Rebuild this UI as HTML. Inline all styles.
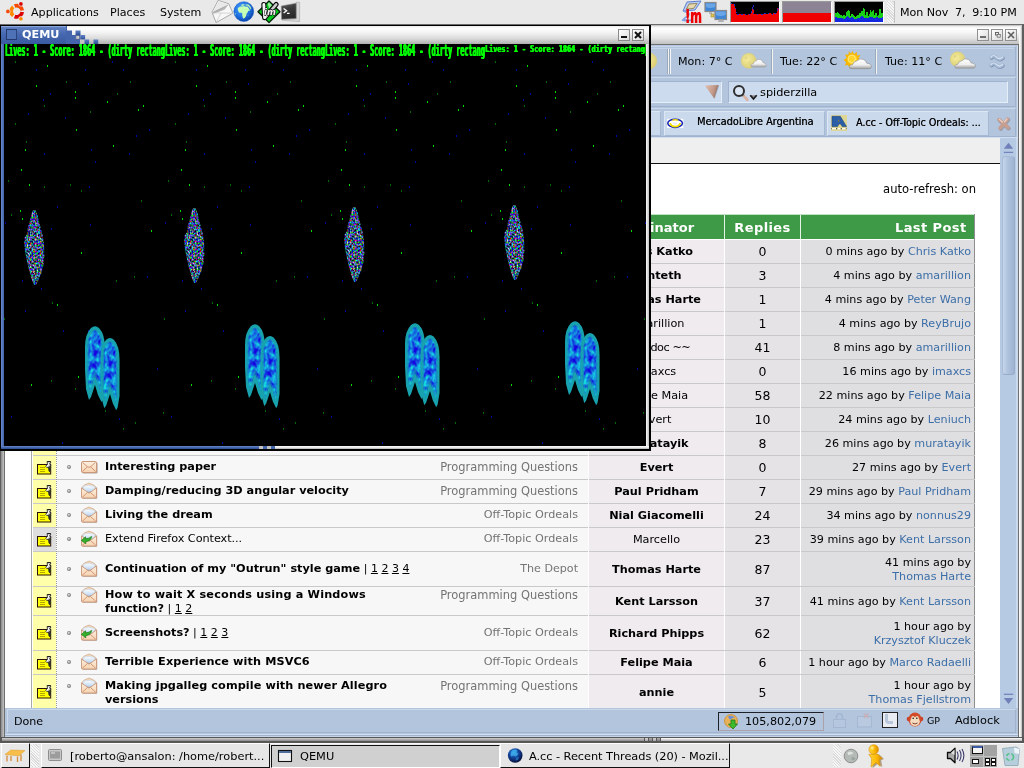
<!DOCTYPE html>
<html lang="en">
<head>
<meta charset="utf-8">
<title>Desktop - QEMU and A.cc Recent Threads</title>
<style>
html,body{margin:0;padding:0;}
body{width:1024px;height:768px;overflow:hidden;position:relative;background:#e8e8e8;font-family:"DejaVu Sans","Liberation Sans",sans-serif;font-size:11px;color:#000;}
div,span,a,svg,i,b{position:absolute;box-sizing:border-box;}
.layer{left:0;top:0;width:1024px;height:768px;will-change:transform;}
.t{white-space:pre;line-height:14px;height:14px;font-size:11.1px;}
a{color:#3c6fa8;text-decoration:none;}
/* ---------- panels ---------- */
#toppanel{left:0;top:0;width:1024px;height:24px;background:#e9e9e9;}
#botpanel{left:0;top:742px;width:1024px;height:26px;background:#e9e9e9;}
/* ---------- firefox window ---------- */
#ffwin{left:0;top:24px;width:1024px;height:718px;background:#f0f0f0;}
.field{background:#cddbee;border:1px solid #9fb3cf;border-right-color:#e6eef8;border-bottom-color:#e6eef8;}
.tab{background:#cbd9ec;border:1px solid #dde7f4;border-right-color:#a6b9d3;border-bottom-color:#a6b9d3;}
.cf{font-family:"DejaVu Sans Condensed","DejaVu Sans","Liberation Sans",sans-serif;text-shadow:0.35px 0 0 rgba(0,0,0,0.75);}
/* ---------- table ---------- */
.hl{left:33px;width:942px;height:1px;background:#c9c9c9;}
.c0{left:33px;width:23px;background:#ffffaa;}
.c0g{left:33px;width:23px;background:#dedede;}
.c1{left:57px;width:532px;background:#f7f7f7;}
.c2{left:589px;width:135px;background:#efebee;}
.c3{left:725px;width:75px;background:#e6e3e6;}
.c4{left:801px;width:173px;background:#dfdee1;}
.tt{font-weight:bold;font-size:11.25px;left:105px;}
.tn{font-size:11.25px;left:105px;}
.pg{font-weight:normal;font-size:11px;}
.pg u{text-decoration:underline;}
.fr{color:#747474;font-size:11.45px;text-align:right;left:380px;width:198px;}
.or{font-weight:bold;font-size:11.25px;text-align:center;left:589px;width:135px;}
.on{font-size:11.25px;text-align:center;left:589px;width:135px;}
.rp{font-size:12.5px;text-align:center;left:725px;width:75px;}
.lp{font-size:11.15px;text-align:right;left:801px;width:170px;}
/* ---------- qemu window ---------- */
.gt{color:#00ff00;font-family:"DejaVu Sans Mono","Liberation Mono",monospace;font-weight:bold;font-size:15px;line-height:14px;height:14px;white-space:pre;transform-origin:0 0;transform:scaleX(0.454);text-shadow:0.9px 0 0 #00ff00,-0.7px 0 0 #00ff00;}
.star{width:1px;height:1px;}
.task{top:2px;height:22px;border:1px solid #fff;border-right-color:#555;border-bottom-color:#555;}
</style>
</head>
<body>
<svg width="0" height="0" style="left:0;top:0">
<defs>
<linearGradient id="gPeach" x1="0" y1="0" x2="0" y2="1"><stop offset="0" stop-color="#fff1e0"/><stop offset="1" stop-color="#f6d2b0"/></linearGradient>
<linearGradient id="gPaper" x1="0" y1="0" x2="0" y2="1"><stop offset="0" stop-color="#ffffff"/><stop offset="1" stop-color="#bcd6f2"/></linearGradient>
<radialGradient id="gGlobe" cx="0.4" cy="0.35" r="0.7"><stop offset="0" stop-color="#4fa4ff"/><stop offset="0.6" stop-color="#1c6ee0"/><stop offset="1" stop-color="#0b3fa0"/></radialGradient>
<radialGradient id="gGlobe2" cx="0.4" cy="0.3" r="0.75"><stop offset="0" stop-color="#3a9ae6"/><stop offset="0.45" stop-color="#14459c"/><stop offset="1" stop-color="#020830"/></radialGradient>
<radialGradient id="gMoon" cx="0.4" cy="0.4" r="0.7"><stop offset="0" stop-color="#f4eb9c"/><stop offset="1" stop-color="#d9cc70"/></radialGradient>
<linearGradient id="gCloud" x1="0" y1="0" x2="0" y2="1"><stop offset="0" stop-color="#ffffff"/><stop offset="0.6" stop-color="#eeeeee"/><stop offset="1" stop-color="#9a9a9a"/></linearGradient>
<!-- sticky note with pin, 15x14 -->
<symbol id="note" viewBox="0 0 15 14">
<rect x="0.5" y="3.5" width="13.2" height="9.5" fill="#ffff00" stroke="#2a1208" stroke-width="1"/>
<path d="M3 6.5h5M3 8.5h5M3 10.5h5" stroke="#b4a800" stroke-width="1"/>
<path d="M8.6 5.2L10.4 3.4L10.2 0.4H13.6V2.2L12.6 2.4L13.6 4.6L13.2 10.8L12 10.2L11.4 6L9.8 6.6z" fill="#fafafa" stroke="#111" stroke-width="0.8" stroke-linejoin="round"/>
<path d="M12.2 4.6L12.7 10.2" stroke="#222" stroke-width="1"/><path d="M10.4 0.7h3" stroke="#111" stroke-width="1"/>
</symbol>
<!-- closed envelope 17x13 -->
<symbol id="envc" viewBox="0 0 17 13">
<rect x="1.4" y="1.4" width="15.2" height="11.2" rx="1.3" fill="#7a5e50" opacity="0.55"/>
<rect x="0.5" y="0.5" width="15" height="11" rx="1.3" fill="url(#gPeach)" stroke="#c9977a" stroke-width="1"/>
<path d="M1.5 1.5L6.3 5.6Q8 7.2 9.7 5.6L14.5 1.5M1.5 10.5L6.4 5.8M14.5 10.5L9.6 5.8" fill="none" stroke="#c4805f" stroke-width="0.8"/>
</symbol>
<!-- open envelope 17x17 -->
<symbol id="envo" viewBox="0 0 17 17">
<path d="M1.5 6.8Q2.8 3.3 8.8 1.8Q14.8 3.3 16.2 6.8V15.9Q16.2 16.8 15.3 16.8H2.4Q1.5 16.8 1.5 15.9z" fill="#7a5e50" opacity="0.55"/>
<path d="M0.6 6.2Q2 2.6 8 1Q14 2.6 15.4 6.2z" fill="#ecd6ba" stroke="#d2ac8c" stroke-width="0.7"/>
<path d="M2.2 4.3Q8 2.3 13.8 4.6V9.5H2.2z" fill="url(#gPaper)" stroke="#b4cdea" stroke-width="0.5"/>
<path d="M0.5 6L8 11.2L15.5 6V15.2Q15.5 16 14.7 16H1.3Q0.5 16 0.5 15.2z" fill="url(#gPeach)" stroke="#c9977a" stroke-width="0.9" stroke-linejoin="round"/>
<path d="M1.2 15.4L6.6 10.4M14.8 15.4L9.4 10.4" fill="none" stroke="#c98866" stroke-width="0.8"/>
</symbol>
<!-- open envelope with green reply arrow -->
<symbol id="enva" viewBox="0 0 17 17">
<use href="#envo" x="0" y="0" width="17" height="17"/>
<path transform="translate(0,0.8)" d="M0.3 9.6L4.6 6L4.5 8Q8.2 8 10.6 5.6Q10.2 10 4.7 10.9L4.9 13z" fill="#35b02c" stroke="#1b7c18" stroke-width="0.7" stroke-linejoin="round"/>
</symbol>
<symbol id="bul" viewBox="0 0 6 6"><circle cx="3" cy="3" r="2" fill="#868686"/><circle cx="2.8" cy="2.8" r="1.05" fill="#d8d8d8"/></symbol>
<!-- weather icons 30x22 -->
<symbol id="cloud" viewBox="0 0 18 10" preserveAspectRatio="none">
<path d="M2.6 9.6Q0.2 9.4 0.6 7.4Q1 5.8 3.2 5.8Q3.6 3.2 6.4 2.6Q8.4 0 11.4 1.4Q13.4 2.4 13.8 4.6Q17.6 5 17.4 7.8Q17.2 9.6 15 9.6z" fill="url(#gCloud)" stroke="#8c8c8c" stroke-width="0.5"/>
</symbol>
<symbol id="moonc" viewBox="0 0 30 22">
<circle cx="9" cy="9" r="7.6" fill="url(#gMoon)" stroke="#d5c977" stroke-width="0.6"/>
<circle cx="6.5" cy="7" r="1.3" fill="#e0d480" opacity="0.8"/><circle cx="10.5" cy="11" r="1.6" fill="#e2d684" opacity="0.7"/>
<use href="#cloud" x="9.5" y="7.5" width="19" height="10.5"/>
</symbol>
<symbol id="sunc" viewBox="0 0 30 22">
<g stroke="#f5b500" stroke-width="1.6" stroke-linecap="round"><path d="M10 1v3M3.2 3.4l2 2M16.8 3.4l-2 2M1 10.2h3M4.2 16l1.6-1.6M19 10.2h-2.6"/></g>
<circle cx="10" cy="10.2" r="5.2" fill="#ffd83a" stroke="#f0a800" stroke-width="0.8"/>
<use href="#cloud" x="9" y="9.5" width="20.5" height="11.2"/>
</symbol>
</defs>
</svg>
<svg width="0" height="0" style="left:0;top:0">
<defs>
<filter id="fNoise" x="0" y="0" width="100%" height="100%" color-interpolation-filters="sRGB">
<feTurbulence type="fractalNoise" baseFrequency="0.6 0.5" numOctaves="2" seed="4" result="n"/>
<feColorMatrix in="n" type="matrix" values="2.4 0 0 0 -0.98  0 2.4 0 0 -0.86  0 0 2.6 0 -0.8  0 0 0 0 1" result="c"/>
<feComposite in="c" in2="SourceGraphic" operator="in"/>
</filter>
<filter id="fBlob" x="0" y="0" width="100%" height="100%" color-interpolation-filters="sRGB">
<feTurbulence type="fractalNoise" baseFrequency="0.22 0.16" numOctaves="2" seed="11" result="n"/>
<feColorMatrix in="n" type="matrix" values="0 0 0 0 0.08  1.6 0 0 0 -0.35  0 0 0 0 0.88  0 0 0 0 1" result="c"/>
<feComposite in="c" in2="SourceGraphic" operator="in"/>
</filter>
<symbol id="rock" viewBox="0 0 24 80">
<path d="M11 3L13.5 3L15.5 8L17 15L19.5 24L21 30L22 38L22.5 48L21.5 58L19.5 66L16.5 73L14 78L12 78L9.5 72L7 63L5 54L3 44L2 36L2.5 31L5 27L6 20L8 14L9 8z" fill="#6a7684" filter="url(#fNoise)"/>
</symbol>
<symbol id="lobe" viewBox="0 0 22 78">
<path d="M1 22Q1 9 7 3Q11 -0.5 15 3Q21 9 21 24L21 62L19 74L17.5 77L14 70L11 60L7 72L5 75L2 64L1 44z" fill="#17a2ae"/>
<path d="M3.5 24Q3.5 12 8 6.5Q11 4 14 6.5Q18.5 12 18.5 26L18.5 60L17 68L11 50L6 66L3.5 54z" fill="#1a44d2" filter="url(#fBlob)"/>
<path d="M4 24Q4 12 8 7Q11 4.5 14 7Q18 12 18 26L18 58L17 64L11 48L6 62L4 52z" fill="none" stroke="#17a2ae" stroke-width="1.2" opacity="0.6"/>
</symbol>
<symbol id="blob" viewBox="0 0 40 90">
<use href="#lobe" x="1" y="0" width="22" height="78"/>
<use href="#lobe" x="16.5" y="10.5" width="21" height="77"/>
</symbol>
</defs>
</svg>
<div class="layer" id="ff">
<div style="left:0;top:24px;width:1024px;height:719px;background:#f2f2f2;border:2px solid #5e5e5e;border-top-width:1px;border-top-color:#6c6c6c;border-bottom-width:0"></div>
<div style="left:2px;top:25px;width:1020px;height:1px;background:#c8c8c8"></div>
<div style="left:2px;top:26px;width:1020px;height:18px;background:linear-gradient(#e6e6e6 0%,#ffffff 12%,#f6f6f6 35%,#e2e2e2 68%,#c0c0c0 100%)"></div>
<div style="left:2px;top:44px;width:1017px;height:1px;background:#707070"></div>
<div style="left:1px;top:45px;width:3px;height:693px;background:linear-gradient(90deg,#8a8a8a,#c4c4c4)"></div>
<div style="left:4px;top:45px;width:1px;height:692px;background:#6e6e6e"></div>
<div style="left:1018px;top:44px;width:1px;height:693px;background:#707070"></div>
<div style="left:1019px;top:26px;width:2px;height:712px;background:linear-gradient(90deg,#fff,#e4e4e4)"></div><div style="left:1021px;top:26px;width:1px;height:712px;background:#c8c8c8"></div>
<div style="left:0;top:737px;width:1024px;height:6px;background:#575757"></div>
<div style="left:2px;top:738px;width:642px;height:3px;background:linear-gradient(#d0d0d0,#8a8a8a)"></div>
<div style="left:661px;top:738px;width:361px;height:3px;background:linear-gradient(#ffffff,#b2b2b2)"></div>
<div style="left:645px;top:738px;width:3px;height:3px;background:linear-gradient(#d8d8d8,#a4a4a4)"></div>
<div style="left:649px;top:738px;width:3px;height:3px;background:linear-gradient(#b0b0b0,#808080)"></div>
<div style="left:653px;top:738px;width:3px;height:3px;background:linear-gradient(#d8d8d8,#a4a4a4)"></div>
<div style="left:657px;top:738px;width:3px;height:3px;background:linear-gradient(#b0b0b0,#808080)"></div>
<div style="left:977px;top:29px;width:12px;height:12px;border:1px solid #909090;background:linear-gradient(135deg,#ffffff,#dadada)"></div>
<div style="left:991px;top:29px;width:12px;height:12px;border:1px solid #909090;background:linear-gradient(135deg,#ffffff,#dadada)"></div>
<div style="left:1005px;top:29px;width:12px;height:12px;border:1px solid #909090;background:linear-gradient(135deg,#ffffff,#dadada)"></div>
<div style="left:980px;top:36px;width:6px;height:2px;background:#6e6e6e"></div>
<svg style="left:995px;top:32px" width="6" height="6" viewBox="0 0 7 7"><rect x="0.5" y="0.5" width="3.5" height="3" fill="#eee" stroke="#555" stroke-width="1"/><rect x="2.5" y="2.8" width="3.6" height="3.2" fill="#eee" stroke="#666" stroke-width="0.9"/></svg>
<svg style="left:1007px;top:31px" width="8" height="8" viewBox="0 0 8 8"><path d="M1 1L7 7M7 1L1 7" stroke="#5e5e5e" stroke-width="1.6"/></svg>
<div style="left:5px;top:45px;width:1013px;height:93px;background:#b2c5dd"></div>
<div style="left:5px;top:46px;width:1011px;height:30px;border:1px solid #c9d8eb;border-right-color:#9fb3cf;border-bottom-color:#9fb3cf"></div>
<div style="left:5px;top:77px;width:1011px;height:30px;border:1px solid #c9d8eb;border-right-color:#9fb3cf;border-bottom-color:#9fb3cf"></div>
<div style="left:5px;top:108px;width:1011px;height:29px;border:1px solid #c9d8eb;border-right-color:#9fb3cf;border-bottom-color:#9fb3cf"></div>
<div style="left:5px;top:137px;width:1013px;height:1px;background:#d3dff0"></div>
<div style="left:1017px;top:45px;width:1px;height:92px;background:#cfdcee"></div>
<div style="left:667px;top:49px;width:1px;height:25px;background:#9aa8bc"></div><div style="left:668px;top:49px;width:1px;height:25px;background:#f4f4f2"></div>
<div style="left:669px;top:49px;width:1px;height:25px;background:#9aa8bc"></div><div style="left:670px;top:49px;width:1px;height:25px;background:#f4f4f2"></div>
<div style="left:771px;top:49px;width:1px;height:25px;background:#9aa8bc"></div><div style="left:772px;top:49px;width:1px;height:25px;background:#f4f4f2"></div>
<div style="left:875px;top:49px;width:1px;height:25px;background:#9aa8bc"></div><div style="left:876px;top:49px;width:1px;height:25px;background:#f4f4f2"></div>
<div style="left:5px;top:48px;width:1009px;height:1px;background:#c6d5e9"></div>
<svg style="left:640px;top:45px" width="380" height="32" viewBox="640 45 380 32">
<circle cx="648.5" cy="61" r="8.3" fill="url(#gMoon)" stroke="#d8cc7c" stroke-width="0.6"/>
<circle cx="748.7" cy="60.8" r="7.5" fill="url(#gMoon)" stroke="#d8cc7c" stroke-width="0.6"/><circle cx="746" cy="58" r="1.4" fill="#ddd182" opacity="0.8"/><circle cx="750" cy="63" r="1.7" fill="#e0d486" opacity="0.7"/>
<use href="#cloud" x="750.3" y="58.4" width="16.6" height="9.2"/>
<g transform="translate(852.3,59.4)"><path d="M0 -8.6L1.7 -5.2L4.6 -7.6L4.6 -3.9L8.2 -4.4L6.1 -1.4L9 0.5L5.6 1.7L2 6L-1.5 5.4L-2.6 9L-4.4 5.3L-7.6 6.3L-6.1 2.8L-8.8 0.6L-5.6 -1.4L-7.3 -4.8L-3.8 -4.6L-3.6 -8.2L-1.2 -5.6z" fill="#f7b500"/><circle cx="0" cy="0" r="5" fill="#ffd428"/><circle cx="-0.5" cy="-0.5" r="3.6" fill="none" stroke="#ffe98a" stroke-width="0.9"/></g>
<use href="#cloud" x="848.6" y="57.8" width="23.6" height="11.6"/>
<circle cx="957.6" cy="59.2" r="7.4" fill="url(#gMoon)" stroke="#d8cc7c" stroke-width="0.6"/><circle cx="955" cy="56.5" r="1.4" fill="#ddd182" opacity="0.8"/>
<use href="#cloud" x="954" y="57.8" width="22.2" height="11"/>
</svg>
<span class="t" style="left:678px;top:55px;font-size:11.1px">Mon: 7° C</span>
<span class="t" style="left:780px;top:55px;font-size:11.1px">Tue: 22° C</span>
<span class="t" style="left:885px;top:55px;font-size:11.1px">Tue: 11° C</span>
<svg style="left:987px;top:52px" width="20" height="20" viewBox="0 0 20 20"><g fill="none" stroke-linecap="round"><path d="M4 5.5Q6.5 2.5 9.5 5.5T15.5 5.5M4 13Q6.5 10 9.5 13T15.5 13" stroke="#7f95b3" stroke-width="3.6" transform="translate(0.5,0.7)"/><path d="M4 5.5Q6.5 2.5 9.5 5.5T15.5 5.5M4 13Q6.5 10 9.5 13T15.5 13" stroke="#a5b9d4" stroke-width="3.2"/><path d="M4 5Q6.5 2 9.5 5T15.5 5M4 12.5Q6.5 9.5 9.5 12.5T15.5 12.5" stroke="#d3e0f0" stroke-width="1.2"/></g></svg>
<div class="field" style="left:100px;top:81px;width:622px;height:22px"></div>
<svg style="left:704px;top:84px" width="17" height="16" viewBox="0 0 17 16"><defs><linearGradient id="gTri" x1="0" y1="0" x2="1" y2="0.3"><stop offset="0" stop-color="#e2beae"/><stop offset="0.7" stop-color="#c19787"/><stop offset="1" stop-color="#8e6e62"/></linearGradient></defs><path d="M1.8 2.2L15.2 1.6L10.8 14.8z" fill="#7c8aa0" opacity="0.5"/><path d="M1 1.5L14.6 1L10.2 14.4z" fill="url(#gTri)"/></svg>
<div class="field" style="left:728px;top:81px;width:280px;height:22px"></div>
<svg style="left:732px;top:84px" width="26" height="18" viewBox="0 0 26 18"><circle cx="7" cy="7" r="5" fill="#dbe6f4" stroke="#2e2e2e" stroke-width="2"/><path d="M10.8 11L12.3 12.6" stroke="#222" stroke-width="2.2"/><path d="M12.2 12.4L15.3 15.8" stroke="#dcb4a4" stroke-width="2.8" stroke-linecap="round"/><path d="M18.3 11.2L21.5 15L24.7 11.2z" fill="#8e8e96"/><path d="M18.3 11.2L21.5 15L24.7 11.2" fill="none" stroke="#1c1c1c" stroke-width="1.7"/></svg>
<span class="t" style="left:760px;top:86px;font-size:11.3px">spiderzilla</span>
<div class="tab" style="left:560px;top:111px;width:101px;height:25px"></div>
<div class="tab" style="left:664px;top:111px;width:161px;height:25px"></div>
<div class="tab" style="left:827px;top:111px;width:162px;height:25px"></div>
<svg style="left:667px;top:118px" width="17" height="11" viewBox="0 0 17 11"><rect x="0" y="0.8" width="16.3" height="9.2" fill="#fff"/><ellipse cx="8.1" cy="5.3" rx="7.3" ry="4.1" fill="#fff" stroke="#1420b4" stroke-width="1.5"/><path d="M5.3 2.2Q8.1 1.3 11.2 2.2" fill="none" stroke="#f2e000" stroke-width="1.4"/><path d="M2.8 5.2Q4.5 8.6 8.1 8.7T13.4 5.2" fill="none" stroke="#f2e000" stroke-width="1.7"/><path d="M5.5 4.6Q8 3.4 10.5 5.8Q8.8 7.4 7.3 6.4z" fill="#e4e6fa"/></svg>
<span class="t cf" style="left:697px;top:115px;font-size:10.85px">MercadoLibre Argentina</span>
<svg style="left:831px;top:115px" width="16" height="16" viewBox="0 0 16 16"><rect x="0" y="0" width="16" height="16" fill="#ddd694"/><path d="M1 1.3H9.3L15.5 11.6H11.3L9.7 9H7.7L6.6 11.6H1z" fill="#2a5fa8" stroke="#1c3f78" stroke-width="0.6" stroke-linejoin="round"/><path d="M7.3 3.8L8.6 6.6H6.9z" fill="#8c7c40"/><path d="M1 13.6h4M6.2 13.6h3.5M10.8 13.6h4" stroke="#fbfbf4" stroke-width="1.1"/><path d="M5 13.6h1.2M9.7 13.6h1.1M0.4 13.6h0.6M14.8 13.6h0.7" stroke="#5a5630" stroke-width="1.1"/></svg>
<span class="t cf" style="left:856px;top:115px;font-size:10.6px">A.cc - Off-Topic Ordeals: ...</span>
<svg style="left:995px;top:115px" width="17" height="17" viewBox="0 0 17 17"><g fill="none" stroke-linecap="round"><path d="M4 4.5L13 12.5M12.5 4L5 13" stroke="#8a7a7c" stroke-width="4" opacity="0.55" transform="translate(0.7,0.9)"/><path d="M4 4.5L13 12.5M12.5 4L5 13" stroke="#c79f91" stroke-width="3.5"/><path d="M4.3 4.3L7.5 7M12 4L9.5 6.8" stroke="#e8cfc4" stroke-width="1.3"/></g></svg>
<div style="left:5px;top:138px;width:995px;height:570px;background:#fff"></div>
<div style="left:5px;top:138px;width:995px;height:25px;background:#efefef"></div>
<div style="left:5px;top:163px;width:995px;height:1px;background:#111"></div>
<span class="t" style="left:776px;top:182px;width:200px;text-align:right;font-size:11.55px">auto-refresh: on</span>
<div style="left:31px;top:214px;width:944px;height:1px;background:#bfe3c2"></div>
<div style="left:31px;top:215px;width:944px;height:24px;background:#3f9a47"></div><div style="left:31px;top:239px;width:944px;height:1px;background:#fff"></div>
<div style="left:31px;top:214px;width:1px;height:494px;background:#a9a9a9"></div>
<div style="left:974px;top:214px;width:1px;height:494px;background:#8e8e8e"></div>
<div style="left:588px;top:215px;width:1px;height:24px;background:#e6f3e6"></div>
<div style="left:724px;top:215px;width:1px;height:24px;background:#e6f3e6"></div>
<div style="left:800px;top:215px;width:1px;height:24px;background:#e6f3e6"></div>
<span class="t" style="font-weight:bold;color:#fff;font-size:13px;letter-spacing:0.4px;top:221px;letter-spacing:0;left:589px;width:135px;text-align:center">Originator</span>
<span class="t" style="font-weight:bold;color:#fff;font-size:13px;letter-spacing:0.4px;top:221px;left:725px;width:75px;text-align:center">Replies</span>
<span class="t" style="font-weight:bold;color:#fff;font-size:13px;letter-spacing:0.4px;top:221px;left:801px;width:165.5px;text-align:right">Last Post</span>
<span class="t" style="font-weight:bold;color:#fff;font-size:13px;letter-spacing:0.4px;top:221px;left:64px">Topic</span>
<div class="c0" style="top:240px;height:23px"></div><div class="c1" style="top:240px;height:23px"></div><div class="c2" style="top:240px;height:23px"></div><div class="c3" style="top:240px;height:23px"></div><div class="c4" style="top:240px;height:23px"></div>
<div class="hl" style="top:263px"></div>
<svg style="left:37px;top:245px" width="15" height="14"><use href="#note"/></svg>
<svg style="left:66px;top:248px" width="6" height="6"><use href="#bul"/></svg>
<svg style="left:81px;top:242px" width="17" height="17"><use href="#envo"/></svg>
<span class="t tt" style="top:244px">Looking for a 2D artist</span>
<span class="t fr" style="top:244px">Game Design &amp; Concepts</span>
<span class="t or" style="top:245px">Chris Katko</span>
<span class="t rp" style="top:245px">0</span>
<span class="t lp" style="top:245px">0 mins ago by <a style="position:static">Chris Katko</a></span>
<div class="c0" style="top:264px;height:23px"></div><div class="c1" style="top:264px;height:23px"></div><div class="c2" style="top:264px;height:23px"></div><div class="c3" style="top:264px;height:23px"></div><div class="c4" style="top:264px;height:23px"></div>
<div class="hl" style="top:287px"></div>
<svg style="left:37px;top:269px" width="15" height="14"><use href="#note"/></svg>
<svg style="left:66px;top:272px" width="6" height="6"><use href="#bul"/></svg>
<svg style="left:81px;top:266px" width="17" height="17"><use href="#envo"/></svg>
<span class="t tt" style="top:268px">Isometric tile engine</span>
<span class="t fr" style="top:268px">Programming Questions</span>
<span class="t or" style="top:269px">Zanteth</span>
<span class="t rp" style="top:269px">3</span>
<span class="t lp" style="top:269px">4 mins ago by <a style="position:static">amarillion</a></span>
<div class="c0" style="top:288px;height:23px"></div><div class="c1" style="top:288px;height:23px"></div><div class="c2" style="top:288px;height:23px"></div><div class="c3" style="top:288px;height:23px"></div><div class="c4" style="top:288px;height:23px"></div>
<div class="hl" style="top:311px"></div>
<svg style="left:37px;top:293px" width="15" height="14"><use href="#note"/></svg>
<svg style="left:66px;top:296px" width="6" height="6"><use href="#bul"/></svg>
<svg style="left:81px;top:290px" width="17" height="17"><use href="#envo"/></svg>
<span class="t tt" style="top:292px">Best sound library?</span>
<span class="t fr" style="top:292px">Programming Questions</span>
<span class="t or" style="top:293px">Thomas Harte</span>
<span class="t rp" style="top:293px">1</span>
<span class="t lp" style="top:293px">4 mins ago by <a style="position:static">Peter Wang</a></span>
<div class="c0g" style="top:312px;height:23px"></div><div class="c1" style="top:312px;height:23px"></div><div class="c2" style="top:312px;height:23px"></div><div class="c3" style="top:312px;height:23px"></div><div class="c4" style="top:312px;height:23px"></div>
<div class="hl" style="top:335px"></div>
<svg style="left:37px;top:317px" width="15" height="14"><use href="#note"/></svg>
<svg style="left:66px;top:320px" width="6" height="6"><use href="#bul"/></svg>
<svg style="left:81px;top:314px" width="17" height="17"><use href="#envo"/></svg>
<span class="t tn" style="top:316px">Allegro 4.2 beta</span>
<span class="t fr" style="top:316px">Allegro Development</span>
<span class="t on" style="top:317px">amarillion</span>
<span class="t rp" style="top:317px">1</span>
<span class="t lp" style="top:317px">4 mins ago by <a style="position:static">ReyBrujo</a></span>
<div class="c0g" style="top:336px;height:23px"></div><div class="c1" style="top:336px;height:23px"></div><div class="c2" style="top:336px;height:23px"></div><div class="c3" style="top:336px;height:23px"></div><div class="c4" style="top:336px;height:23px"></div>
<div class="hl" style="top:359px"></div>
<svg style="left:37px;top:341px" width="15" height="14"><use href="#note"/></svg>
<svg style="left:66px;top:344px" width="6" height="6"><use href="#bul"/></svg>
<svg style="left:81px;top:338px" width="17" height="17"><use href="#envo"/></svg>
<span class="t tn" style="top:340px">What are you listening to?</span>
<span class="t fr" style="top:340px;font-size:11.2px">Off-Topic Ordeals</span>
<span class="t on" style="top:341px"><span style="position:static;letter-spacing:-0.45px">~~ Edoc ~~</span></span>
<span class="t rp" style="top:341px">41</span>
<span class="t lp" style="top:341px">8 mins ago by <a style="position:static">amarillion</a></span>
<div class="c0g" style="top:360px;height:23px"></div><div class="c1" style="top:360px;height:23px"></div><div class="c2" style="top:360px;height:23px"></div><div class="c3" style="top:360px;height:23px"></div><div class="c4" style="top:360px;height:23px"></div>
<div class="hl" style="top:383px"></div>
<svg style="left:37px;top:365px" width="15" height="14"><use href="#note"/></svg>
<svg style="left:66px;top:368px" width="6" height="6"><use href="#bul"/></svg>
<svg style="left:81px;top:365px" width="17" height="13"><use href="#envc"/></svg>
<span class="t tn" style="top:364px">Mouse problem</span>
<span class="t fr" style="top:364px">Programming Questions</span>
<span class="t on" style="top:365px">imaxcs</span>
<span class="t rp" style="top:365px">0</span>
<span class="t lp" style="top:365px">16 mins ago by <a style="position:static">imaxcs</a></span>
<div class="c0g" style="top:384px;height:23px"></div><div class="c1" style="top:384px;height:23px"></div><div class="c2" style="top:384px;height:23px"></div><div class="c3" style="top:384px;height:23px"></div><div class="c4" style="top:384px;height:23px"></div>
<div class="hl" style="top:407px"></div>
<svg style="left:37px;top:389px" width="15" height="14"><use href="#note"/></svg>
<svg style="left:66px;top:392px" width="6" height="6"><use href="#bul"/></svg>
<svg style="left:81px;top:386px" width="17" height="17"><use href="#envo"/></svg>
<span class="t tn" style="top:388px">Brazilian members</span>
<span class="t fr" style="top:388px;font-size:11.2px">Off-Topic Ordeals</span>
<span class="t on" style="top:389px">Felipe Maia</span>
<span class="t rp" style="top:389px">58</span>
<span class="t lp" style="top:389px">22 mins ago by <a style="position:static">Felipe Maia</a></span>
<div class="c0g" style="top:408px;height:23px"></div><div class="c1" style="top:408px;height:23px"></div><div class="c2" style="top:408px;height:23px"></div><div class="c3" style="top:408px;height:23px"></div><div class="c4" style="top:408px;height:23px"></div>
<div class="hl" style="top:431px"></div>
<svg style="left:37px;top:413px" width="15" height="14"><use href="#note"/></svg>
<svg style="left:66px;top:416px" width="6" height="6"><use href="#bul"/></svg>
<svg style="left:81px;top:410px" width="17" height="17"><use href="#envo"/></svg>
<span class="t tn" style="top:412px">Eagle GUI</span>
<span class="t fr" style="top:412px;font-size:11.1px">The Depot</span>
<span class="t on" style="top:413px">Evert</span>
<span class="t rp" style="top:413px">10</span>
<span class="t lp" style="top:413px">24 mins ago by <a style="position:static">Leniuch</a></span>
<div class="c0" style="top:432px;height:23px"></div><div class="c1" style="top:432px;height:23px"></div><div class="c2" style="top:432px;height:23px"></div><div class="c3" style="top:432px;height:23px"></div><div class="c4" style="top:432px;height:23px"></div>
<div class="hl" style="top:455px"></div>
<svg style="left:37px;top:437px" width="15" height="14"><use href="#note"/></svg>
<svg style="left:66px;top:440px" width="6" height="6"><use href="#bul"/></svg>
<svg style="left:81px;top:434px" width="17" height="17"><use href="#envo"/></svg>
<span class="t tt" style="top:436px">Bitmap rotation</span>
<span class="t fr" style="top:436px">Programming Questions</span>
<span class="t or" style="top:437px">muratayik</span>
<span class="t rp" style="top:437px">8</span>
<span class="t lp" style="top:437px">26 mins ago by <a style="position:static">muratayik</a></span>
<div class="c0" style="top:456px;height:23px"></div><div class="c1" style="top:456px;height:23px"></div><div class="c2" style="top:456px;height:23px"></div><div class="c3" style="top:456px;height:23px"></div><div class="c4" style="top:456px;height:23px"></div>
<div class="hl" style="top:479px"></div>
<svg style="left:37px;top:461px" width="15" height="14"><use href="#note"/></svg>
<svg style="left:66px;top:464px" width="6" height="6"><use href="#bul"/></svg>
<svg style="left:81px;top:461px" width="17" height="13"><use href="#envc"/></svg>
<span class="t tt" style="top:460px">Interesting paper</span>
<span class="t fr" style="top:460px">Programming Questions</span>
<span class="t or" style="top:461px">Evert</span>
<span class="t rp" style="top:461px">0</span>
<span class="t lp" style="top:461px">27 mins ago by <a style="position:static">Evert</a></span>
<div class="c0" style="top:480px;height:23px"></div><div class="c1" style="top:480px;height:23px"></div><div class="c2" style="top:480px;height:23px"></div><div class="c3" style="top:480px;height:23px"></div><div class="c4" style="top:480px;height:23px"></div>
<div class="hl" style="top:503px"></div>
<svg style="left:37px;top:485px" width="15" height="14"><use href="#note"/></svg>
<svg style="left:66px;top:488px" width="6" height="6"><use href="#bul"/></svg>
<svg style="left:81px;top:482px" width="17" height="17"><use href="#envo"/></svg>
<span class="t tt" style="top:484px">Damping/reducing 3D angular velocity</span>
<span class="t fr" style="top:484px">Programming Questions</span>
<span class="t or" style="top:485px">Paul Pridham</span>
<span class="t rp" style="top:485px">7</span>
<span class="t lp" style="top:485px">29 mins ago by <a style="position:static">Paul Pridham</a></span>
<div class="c0" style="top:504px;height:23px"></div><div class="c1" style="top:504px;height:23px"></div><div class="c2" style="top:504px;height:23px"></div><div class="c3" style="top:504px;height:23px"></div><div class="c4" style="top:504px;height:23px"></div>
<div class="hl" style="top:527px"></div>
<svg style="left:37px;top:509px" width="15" height="14"><use href="#note"/></svg>
<svg style="left:66px;top:512px" width="6" height="6"><use href="#bul"/></svg>
<svg style="left:81px;top:506px" width="17" height="17"><use href="#envo"/></svg>
<span class="t tt" style="top:508px">Living the dream</span>
<span class="t fr" style="top:508px;font-size:11.2px">Off-Topic Ordeals</span>
<span class="t or" style="top:509px">Nial Giacomelli</span>
<span class="t rp" style="top:509px">24</span>
<span class="t lp" style="top:509px">34 mins ago by <a style="position:static">nonnus29</a></span>
<div class="c0g" style="top:528px;height:23px"></div><div class="c1" style="top:528px;height:23px"></div><div class="c2" style="top:528px;height:23px"></div><div class="c3" style="top:528px;height:23px"></div><div class="c4" style="top:528px;height:23px"></div>
<div class="hl" style="top:551px"></div>
<svg style="left:37px;top:533px" width="15" height="14"><use href="#note"/></svg>
<svg style="left:66px;top:536px" width="6" height="6"><use href="#bul"/></svg>
<svg style="left:81px;top:530px" width="17" height="17"><use href="#enva"/></svg>
<span class="t tn" style="top:532px"><span style="position:static;letter-spacing:-0.06px">Extend Firefox Context...</span></span>
<span class="t fr" style="top:532px;font-size:11.2px">Off-Topic Ordeals</span>
<span class="t on" style="top:533px">Marcello</span>
<span class="t rp" style="top:533px">23</span>
<span class="t lp" style="top:533px">39 mins ago by <a style="position:static">Kent Larsson</a></span>
<div class="c0" style="top:552px;height:34px"></div><div class="c1" style="top:552px;height:34px"></div><div class="c2" style="top:552px;height:34px"></div><div class="c3" style="top:552px;height:34px"></div><div class="c4" style="top:552px;height:34px"></div>
<div class="hl" style="top:586px"></div>
<svg style="left:37px;top:562px" width="15" height="14"><use href="#note"/></svg>
<svg style="left:66px;top:566px" width="6" height="6"><use href="#bul"/></svg>
<svg style="left:81px;top:560px" width="17" height="17"><use href="#envo"/></svg>
<span class="t tt" style="top:562px">Continuation of my "Outrun" style game<span class="pg" style="position:static"> | <u>1</u> <u>2</u> <u>3</u> <u>4</u></span></span>
<span class="t fr" style="top:562px;font-size:11.1px">The Depot</span>
<span class="t or" style="top:563px">Thomas Harte</span>
<span class="t rp" style="top:563px">87</span>
<span class="t lp" style="top:556px">41 mins ago by</span>
<span class="t lp" style="top:570px"><a style="position:static">Thomas Harte</a></span>
<div class="c0" style="top:587px;height:28px"></div><div class="c1" style="top:587px;height:28px"></div><div class="c2" style="top:587px;height:28px"></div><div class="c3" style="top:587px;height:28px"></div><div class="c4" style="top:587px;height:28px"></div>
<div class="hl" style="top:615px"></div>
<svg style="left:37px;top:594px" width="15" height="14"><use href="#note"/></svg>
<svg style="left:66px;top:592px" width="6" height="6"><use href="#bul"/></svg>
<svg style="left:81px;top:586px" width="17" height="17"><use href="#envo"/></svg>
<span class="t tt" style="top:588px"><span style="position:static;letter-spacing:0.165px">How to wait X seconds using a Windows</span></span>
<span class="t tt" style="top:602px">function?<span class="pg" style="position:static"> | <u>1</u> <u>2</u></span></span>
<span class="t fr" style="top:588px">Programming Questions</span>
<span class="t or" style="top:595px">Kent Larsson</span>
<span class="t rp" style="top:595px">37</span>
<span class="t lp" style="top:595px">41 mins ago by <a style="position:static">Kent Larsson</a></span>
<div class="c0" style="top:616px;height:34px"></div><div class="c1" style="top:616px;height:34px"></div><div class="c2" style="top:616px;height:34px"></div><div class="c3" style="top:616px;height:34px"></div><div class="c4" style="top:616px;height:34px"></div>
<div class="hl" style="top:650px"></div>
<svg style="left:37px;top:626px" width="15" height="14"><use href="#note"/></svg>
<svg style="left:66px;top:630px" width="6" height="6"><use href="#bul"/></svg>
<svg style="left:81px;top:624px" width="17" height="17"><use href="#enva"/></svg>
<span class="t tt" style="top:626px">Screenshots?<span class="pg" style="position:static"> | <u>1</u> <u>2</u> <u>3</u></span></span>
<span class="t fr" style="top:626px;font-size:11.2px">Off-Topic Ordeals</span>
<span class="t or" style="top:627px">Richard Phipps</span>
<span class="t rp" style="top:627px">62</span>
<span class="t lp" style="top:620px">1 hour ago by</span>
<span class="t lp" style="top:634px"><a style="position:static">Krzysztof Kluczek</a></span>
<div class="c0" style="top:651px;height:23px"></div><div class="c1" style="top:651px;height:23px"></div><div class="c2" style="top:651px;height:23px"></div><div class="c3" style="top:651px;height:23px"></div><div class="c4" style="top:651px;height:23px"></div>
<div class="hl" style="top:674px"></div>
<svg style="left:37px;top:656px" width="15" height="14"><use href="#note"/></svg>
<svg style="left:66px;top:659px" width="6" height="6"><use href="#bul"/></svg>
<svg style="left:81px;top:653px" width="17" height="17"><use href="#envo"/></svg>
<span class="t tt" style="top:655px"><span style="position:static;letter-spacing:0.1px">Terrible Experience with MSVC6</span></span>
<span class="t fr" style="top:655px;font-size:11.2px">Off-Topic Ordeals</span>
<span class="t or" style="top:656px">Felipe Maia</span>
<span class="t rp" style="top:656px">6</span>
<span class="t lp" style="top:656px">1 hour ago by <a style="position:static">Marco Radaelli</a></span>
<div class="c0" style="top:675px;height:34px"></div><div class="c1" style="top:675px;height:34px"></div><div class="c2" style="top:675px;height:34px"></div><div class="c3" style="top:675px;height:34px"></div><div class="c4" style="top:675px;height:34px"></div>
<div class="hl" style="top:709px"></div>
<svg style="left:37px;top:685px" width="15" height="14"><use href="#note"/></svg>
<svg style="left:66px;top:683px" width="6" height="6"><use href="#bul"/></svg>
<svg style="left:81px;top:677px" width="17" height="17"><use href="#envo"/></svg>
<span class="t tt" style="top:679px"><span style="position:static;letter-spacing:0.085px">Making jpgalleg compile with newer Allegro</span></span>
<span class="t tt" style="top:693px">versions</span>
<span class="t fr" style="top:679px">Programming Questions</span>
<span class="t or" style="top:686px">annie</span>
<span class="t rp" style="top:686px">5</span>
<span class="t lp" style="top:679px">1 hour ago by</span>
<span class="t lp" style="top:693px"><a style="position:static">Thomas Fjellstrom</a></span>
<div style="left:56px;top:239px;width:1px;height:469px;background:repeating-linear-gradient(#9a9a9a 0 1px,transparent 1px 2px)"></div>
<div style="left:724px;top:239px;width:1px;height:469px;background:repeating-linear-gradient(#fff 0 1px,transparent 1px 2px)"></div>
<div style="left:800px;top:239px;width:1px;height:469px;background:repeating-linear-gradient(#fff 0 1px,transparent 1px 2px)"></div>
<div style="left:588px;top:239px;width:1px;height:469px;background:#fdfdfd"></div>
<div style="left:1000px;top:138px;width:16px;height:570px;background:#b7cae4"></div>
<div style="left:1016px;top:138px;width:2px;height:570px;background:#c9d8ec"></div>
<svg style="left:1000px;top:140px" width="17" height="17" viewBox="0 0 17 17"><path d="M3.8 8.7L8.5 2.8L13.2 8.7z" fill="#7080b8"/><path d="M3.8 12.4h9.4" stroke="#7484bc" stroke-width="1.3"/></svg>
<div style="left:1002px;top:156px;width:13px;height:219px;border-radius:3px;background:linear-gradient(90deg,#c6d6ea 0%,#aec2dd 45%,#9fb4d2 100%);border:1px solid #98acca;border-top-color:#a9bbd6;border-left-color:#a9bbd6"></div>
<svg style="left:1000px;top:690px" width="17" height="17" viewBox="0 0 17 17"><path d="M3.8 4.3h9.4" stroke="#7484bc" stroke-width="1.3"/><path d="M3.8 8L8.5 14L13.2 8z" fill="#7080b8"/></svg>
<div style="left:5px;top:708px;width:1013px;height:29px;background:#b2c5dd"></div><div style="left:5px;top:734px;width:1013px;height:1px;background:#d3dfee"></div><div style="left:5px;top:735px;width:1013px;height:1px;background:#9fb3cf"></div><div style="left:5px;top:736px;width:1013px;height:1px;background:#c6d4e7"></div>
<div style="left:7px;top:709px;width:1009px;height:24px;border:1px solid #c9d8eb;border-right-color:#9fb3cf;border-bottom-color:#9fb3cf"></div>
<span class="t" style="left:14px;top:715px">Done</span>
<div style="left:718px;top:712px;width:106px;height:19px;border:1px solid #1e2228;border-right-color:#aaa2a8;border-bottom-color:#aaa2a8"></div>
<svg style="left:723px;top:713px" width="18" height="17" viewBox="0 0 18 17"><circle cx="8" cy="8" r="6.5" fill="#e9b25a" stroke="#c98a2a" stroke-width="0.8"/><path d="M5 3.5Q9 1.5 12 5Q9 4 8 6.5Q6 7 5 3.5z" fill="#6a8fd8"/><path d="M8 7h4v4h2.5L10 16L5.5 11H8z" fill="#3dbb2e" stroke="#1c7a14" stroke-width="0.8"/></svg>
<span class="t" style="left:745px;top:715px;font-size:11.2px">105,802,079</span>
<svg style="left:831px;top:712px" width="18" height="17" viewBox="0 0 18 17" opacity="0.55"><rect x="2.5" y="7.5" width="12" height="8" fill="#b9cae2" stroke="#98adca"/><path d="M5.5 7.5V5Q5.5 1.8 8.5 1.8T11.5 5V7.5" fill="none" stroke="#98adca" stroke-width="1.6"/></svg>
<svg style="left:856px;top:712px" width="18" height="17" viewBox="0 0 18 17" opacity="0.6"><rect x="1.5" y="4.5" width="14" height="10.5" fill="#bccce3" stroke="#9cb0cc"/><path d="M8 1.5L12.5 6M12.5 1.5L8 6" stroke="#d7a0a0" stroke-width="1.6"/></svg>
<div style="left:882px;top:712px;width:16px;height:16px;background:#e9edf3;border:1px solid #222"></div><div style="left:885px;top:714px;width:8px;height:10px;border-left:3px solid #b8c6da;border-bottom:3px solid #b8c6da;border-radius:0 0 0 4px"></div>
<svg style="left:906px;top:711px" width="18" height="18" viewBox="0 0 18 18"><circle cx="3" cy="8" r="2.3" fill="#c9402a"/><circle cx="15" cy="8" r="2.3" fill="#c9402a"/><ellipse cx="9" cy="8.5" rx="6.5" ry="7" fill="#d34a2a"/><ellipse cx="9" cy="10.5" rx="4.8" ry="4.6" fill="#f5dcc0"/><ellipse cx="7" cy="7" rx="1.7" ry="2" fill="#f5dcc0"/><ellipse cx="11" cy="7" rx="1.7" ry="2" fill="#f5dcc0"/><circle cx="7.2" cy="7.3" r="0.8" fill="#111"/><circle cx="10.8" cy="7.3" r="0.8" fill="#111"/><path d="M6.5 12Q9 14 11.5 12" stroke="#6a2a1a" stroke-width="0.9" fill="none"/></svg>
<span class="t" style="left:927px;top:714px;font-size:9.5px">GP</span>
<span class="t" style="left:955px;top:714px;font-size:11.3px">Adblock</span>
</div>
<div class="layer" id="tp">
<div style="left:0;top:0;width:1024px;height:24px;background:#e9e9e9"></div>
<svg style="left:0;top:0" width="34" height="24" viewBox="0 0 34 24">
<g fill="none" stroke-width="3.7">
<path d="M14.6 6.06A5.6 5.6 0 0 1 22.25 10.47" stroke="#f44a04"/>
<path d="M22.25 12.03A5.6 5.6 0 0 1 14.6 16.44" stroke="#dc0000"/>
<path d="M13.25 15.66A5.6 5.6 0 0 1 13.25 6.84" stroke="#ff8a00"/>
</g>
<circle cx="20.9" cy="3.9" r="2.5" fill="#e9e9e9"/><circle cx="7.9" cy="11.4" r="2.5" fill="#e9e9e9"/><circle cx="20.9" cy="18.75" r="2.5" fill="#e9e9e9"/>
<circle cx="20.9" cy="3.9" r="1.85" fill="#dc0000"/><circle cx="7.9" cy="11.4" r="1.85" fill="#f44a04"/><circle cx="20.9" cy="18.75" r="1.85" fill="#ff8a00"/>
</svg>
<span class="t" style="left:31px;top:6px;font-size:11.1px">Applications</span>
<span class="t" style="left:110px;top:6px;font-size:11.1px">Places</span>
<span class="t" style="left:160px;top:6px;font-size:11.1px">System</span>
<svg style="left:210px;top:0" width="24" height="24" viewBox="0 0 24 24">
<defs><linearGradient id="gMailBand" x1="0" y1="0" x2="1" y2="1"><stop offset="0" stop-color="#f2f2f2"/><stop offset="0.45" stop-color="#a9a9a9"/><stop offset="1" stop-color="#e2e2e2"/></linearGradient></defs>
<path d="M2 12.2L8.2 0.3L18.8 3.8L22.9 13.2L6.1 22.6z" fill="#f7f7f7" stroke="#a2a2a2" stroke-width="0.9" stroke-linejoin="round"/>
<path d="M2.6 12L8.4 1L18.2 4.2z" fill="#e9e9e9"/>
<path d="M2.6 12.1L18.6 4.2L14.5 9.8L3.4 13.8z" fill="url(#gMailBand)"/>
<path d="M6.1 22.6L11 13L22.9 13.2M11 13L3 12.8" fill="none" stroke="#c6c6c6" stroke-width="0.7"/>
</svg>
<svg style="left:233px;top:1px" width="22" height="22" viewBox="0 0 22 22">
<circle cx="10.8" cy="10.6" r="9.9" fill="url(#gGlobe)" stroke="#0f56c4" stroke-width="0.5"/>
<path d="M4.7 7.5Q5.6 5.8 7.6 5.4L9.5 5.6L10.8 5.1L12.8 5.7L14.6 5.5L15.7 7.2L17.3 9.5L15.3 9.7Q14.8 11.5 13.6 12.6Q13.6 14.6 12.5 15.7L11.8 17.1L10 17.4Q9.6 15.6 9.2 14.3Q9.6 12.6 8.8 11.7L6.4 11.7Q4.7 10.3 4.7 7.5z" fill="#c6ffb4"/>
<path d="M7.8 4.6L9 3.3L11.5 3L11.2 4.3L9.6 4.9zM12.3 3.4L15.2 3.3L17.2 5L18.3 7.3L17.6 8.4L16.2 6.3L14.7 4.7L12.6 4.6zM14.7 14.3L15.3 13.7L15.1 15.3zM1.9 11.5Q1.7 13.4 2.5 14.3L2.6 12.3z" fill="#c0f7b0" opacity="0.9"/>
</svg>
<svg style="left:257px;top:0" width="24" height="24" viewBox="0 0 24 24">
<path d="M12 1L23 11.8L12 22.6L1 11.8z" fill="#00c81a" stroke="#051a05" stroke-width="1.3" stroke-linejoin="round"/>
<path d="M12 2.3L15 5.2L12.3 8.8L10.6 3.8z" fill="#9fe8a0"/>
<path d="M6.8 4.4L7.6 17.8L19.2 4.4" fill="none" stroke="#0a0a0a" stroke-width="5" stroke-linejoin="round" stroke-linecap="round"/>
<path d="M8.3 17.4L19.2 4.4" fill="none" stroke="#cdcdcd" stroke-width="2.6" stroke-linecap="round"/><path d="M6.8 4.4L7.6 17.6" fill="none" stroke="#f6f6f6" stroke-width="2.8" stroke-linecap="round"/>
</svg>
<span class="t" style="left:264px;top:5px;font-size:8.5px;font-weight:bold;font-style:italic;color:#f2f2f2;text-shadow:0.6px 0 0 #222,-0.6px 0 0 #222,0 0.6px 0 #222,0 -0.6px 0 #222;letter-spacing:0.2px">im</span>
<svg style="left:280px;top:1px" width="22" height="22" viewBox="0 0 22 22">
<defs><linearGradient id="gTerm" x1="0" y1="0" x2="0.3" y2="1"><stop offset="0" stop-color="#5e5e5e"/><stop offset="0.45" stop-color="#3a3a3a"/><stop offset="1" stop-color="#2a2a2a"/></linearGradient></defs>
<path d="M16 1.3L19.6 1.2V20.6L2.4 19.3L1.6 18.3L16 17.5z" fill="#d7d7d7" stroke="#a8a8a8" stroke-width="0.6"/>
<path d="M1.3 5L16.2 2.2V17.6L1.6 18.3z" fill="url(#gTerm)" stroke="#8c8c8c" stroke-width="0.6"/>
<path d="M3.6 7.5L6.6 9.7L3.6 11.9M7 12.3h2.6" fill="none" stroke="#fff" stroke-width="1.3"/>
</svg>
<svg style="left:680px;top:0px" width="24" height="24" viewBox="0 0 24 24">
<path d="M7 2L21 1L15 10L3 11z" fill="#b9cdf0" stroke="#5f7fd0" stroke-width="1"/>
<path d="M9 4L17 3.5L13.5 8.5L6.5 9z" fill="#e6d9b0" stroke="#70581a" stroke-width="0.6"/>
<path d="M3 11Q11 13 8 16Q4 18 3 20Q8 21 12 20" fill="none" stroke="#7f9fe6" stroke-width="1.8"/>
</svg>
<span class="t" style="left:685px;top:6px;font-size:20px;font-weight:bold;color:#ee0000;line-height:20px;height:20px;transform-origin:0 0;transform:scaleX(0.56);text-shadow:0.6px 0 0 #ee0000">!m</span>
<svg style="left:704px;top:1px" width="24" height="22" viewBox="0 0 24 22">
<rect x="1" y="1.5" width="11" height="9" fill="#3f86d6" stroke="#8a8a8a" stroke-width="1.2"/><path d="M2 2.5h9v3.5Q6 8 2 6z" fill="#7db4ee" opacity="0.7"/>
<path d="M5 11h3v2h-3z" fill="#b9b9b9"/><rect x="7" y="13" width="3" height="3" fill="#e9c84a" stroke="#8a7a2a" stroke-width="0.5"/>
<rect x="11" y="9.5" width="11.5" height="9" fill="#3f86d6" stroke="#8a8a8a" stroke-width="1.2"/><path d="M12 10.5h9.5v3.5Q17 16 12 14z" fill="#7db4ee" opacity="0.7"/>
<path d="M15 18.5h4l1 2.5h-6z" fill="#b0b0b0"/>
</svg>
<div style="left:730px;top:1px;width:50px;height:22px;background:#000;border:1px solid #9a9a9a;border-right-color:#fff;border-bottom-color:#fff"></div>
<svg style="left:731px;top:2px" width="48" height="20" viewBox="0 0 48 20" shape-rendering="crispEdges">
<path d="M0 20V2L3 1.5L4 6L5 7V12L6 13L8 12L10 12.5L13 12L15 13L18 12L20 12.5L22 3L23 12L26 12.5L28 11.5L31 12.5L34 11.5L37 12L39 10.5L41 12.5L43 11L45 11L46 10V6L48 6V20z" fill="#f00000"/>
<path d="M0 2L3 1.5L4 6L5 7V12L6 13L8 12L10 12.5L13 12L15 13L18 12L20 12.5L22 3L23 12L26 12.5L28 11.5L31 12.5L34 11.5L37 12L39 10.5L41 12.5L43 11L45 11L46 10V6L48 6" fill="none" stroke="#1030e0" stroke-width="0.9" stroke-dasharray="1.5 2.5"/>
</svg>
<div style="left:782px;top:1px;width:50px;height:22px;background:#8c8494;border:1px solid #9a9a9a;border-right-color:#fff;border-bottom-color:#fff"></div>
<div style="left:783px;top:13px;width:48px;height:9px;background:#f00000"></div>
<div style="left:834px;top:1px;width:50px;height:22px;background:#000;border:1px solid #9a9a9a;border-right-color:#fff;border-bottom-color:#fff"></div>
<svg style="left:835px;top:2px" width="48" height="20" viewBox="0 0 48 20" shape-rendering="crispEdges">
<path d="M0 20V13L1 9L2 13L3 7L4 14L5 10L6 15L7 12L8 16L9 11L10 14L11 15L12 5L13 12L14 4L15 13L16 15L17 10L18 14L19 12L20 16L21 14L22 15L23 12L24 14L25 9L26 12L27 7L28 11L29 1L30 12L31 14L32 6L33 13L34 15L35 10L36 7L37 13L38 5L39 11L40 14L41 8L42 13L43 15L44 11L45 4L46 9L47 12L48 10V20z" fill="#18d018"/>
<path d="M0 20V15L3 16L6 15.5L9 17L12 14L14 16L17 15L20 17L24 16L27 14L30 16.5L33 16L36 14.5L39 16L42 15L45 16.5L48 15V20z" fill="#1428e0"/>
</svg>
<div style="left:887px;top:1px;width:8px;height:22px;background:repeating-linear-gradient(45deg,#f6f6f6 0 1px,#dadada 1px 2px);border-right:1px solid #c4c4c4"></div>
<span class="t" style="left:900px;top:6px;font-size:11.1px;word-spacing:-0.2px">Mon Nov  7,  9:10 PM</span>
</div>
<div class="layer" id="bp">
<div style="left:0;top:743px;width:1024px;height:25px;background:#e9e9e9;border-top:1px solid #fbfbfb"></div>
<div style="left:1px;top:743px;width:29px;height:25px;border:1px solid #fff;border-right:1px solid #111;border-bottom:1px solid #111;background:#e8e8e8"></div>
<svg style="left:4px;top:749px" width="22" height="14" viewBox="0 0 22 14">
<path d="M1 5.5L7 1L21 1.5L15 6.8z" fill="#f7bf4a" stroke="#e0a030" stroke-width="0.6"/>
<path d="M3 6.5V12.5M7 7V12M13.5 7.5V13M17 5.5V12" stroke="#d58a3a" stroke-width="1.3"/>
</svg>
<div style="left:31px;top:744px;width:8px;height:23px;background:repeating-linear-gradient(45deg,#f6f6f6 0 1px,#dadada 1px 2px)"></div>
<div style="left:41px;top:743px;width:229px;height:25px;border:1px solid #fff;border-right:1px solid #111;border-bottom:1px solid #111;background:#e6e6e6"></div>
<svg style="left:48px;top:749px" width="15" height="13" viewBox="0 0 15 13"><rect x="0.5" y="0.5" width="13" height="11" rx="1" fill="#c8c8c8" stroke="#8e8e8e"/><rect x="2" y="2.5" width="10" height="7" fill="#9c9c9c"/><path d="M3 4h4" stroke="#e6e6e6" stroke-width="1"/></svg>
<span class="t" style="left:70px;top:749px;font-size:11.35px">[roberto@ansalon: /home/robert...</span>
<div style="left:271px;top:745px;width:229px;height:23px;background:#d0d0d0;border:1px solid #111;border-right:1px solid #fff;border-bottom:1px solid #fff"></div>
<svg style="left:277px;top:749px" width="16" height="14" viewBox="0 0 16 14"><rect x="1.5" y="1.5" width="13" height="11" fill="#f0eff2" stroke="#111" stroke-width="1.1"/><rect x="2.1" y="2.1" width="11.8" height="1.8" fill="#3f5f94"/></svg>
<span class="t" style="left:300px;top:749px;font-size:11.35px">QEMU</span>
<div style="left:500px;top:743px;width:230px;height:25px;border:1px solid #fff;border-right:1px solid #111;border-bottom:1px solid #111;background:#e6e6e6"></div>
<svg style="left:507px;top:747px" width="17" height="17" viewBox="0 0 17 17"><circle cx="8.2" cy="8.5" r="7.3" fill="url(#gGlobe2)"/><path d="M5 3.5Q8 1.8 10 3L9.6 5.5L11.5 7L9 9.5L6.5 8.5L4 9.5Q3 6 5 3.5z" fill="#3fb0ee" opacity="0.75"/><path d="M9 10.5L12 10L11 13L8.5 13.5z" fill="#2f8fe0" opacity="0.6"/></svg>
<span class="t" style="left:529px;top:749px;font-size:11.35px;letter-spacing:-0.05px">A.cc - Recent Threads (20) - Mozil...</span>
<div style="left:833px;top:744px;width:8px;height:23px;background:repeating-linear-gradient(45deg,#f6f6f6 0 1px,#dadada 1px 2px)"></div>
<svg style="left:843px;top:748px" width="16" height="16" viewBox="0 0 16 16"><circle cx="8" cy="8" r="6.8" fill="#b4bab6" stroke="#8e8e8e" stroke-width="1"/><path d="M4.5 4Q8 2.5 10.5 5Q8 7.5 5 7z" fill="#dde4de"/><path d="M9 9Q12 9 12.5 11Q10 13 8.5 11.5z" fill="#98a49c"/></svg>
<svg style="left:864px;top:744px" width="21" height="24" viewBox="0 0 18 21"><defs><linearGradient id="gGuy" x1="0" y1="0" x2="1" y2="0"><stop offset="0" stop-color="#ffd440"/><stop offset="0.55" stop-color="#ffbc08"/><stop offset="1" stop-color="#d88a00"/></linearGradient></defs><path d="M12 8.5L16 12.5L13.5 13.5L14.5 19.5L10.5 16.5L6 20.5L6.5 12.5L4 9z" fill="#6a4408" opacity="0.45" transform="translate(1.3,0.7)"/><path d="M4 9h8l3.6 3.6l-2.6 1.4l1 5.5l-3.8-3.3L6 20.3l0.5-7.5z" fill="url(#gGuy)" stroke="#d8900a" stroke-width="0.5"/><circle cx="8.3" cy="4.8" r="4.2" fill="url(#gGuy)" stroke="#d8900a" stroke-width="0.5"/><circle cx="7" cy="3.5" r="1.5" fill="#ffe890" opacity="0.8"/></svg>
<svg style="left:946px;top:747px" width="20" height="17" viewBox="0 0 20 17"><path d="M1.5 5.5h3l4.5-4.3v14.6L4.5 11.5H1.5z" fill="#a8a8a8" stroke="#0c0c0c" stroke-width="1.3" stroke-linejoin="round"/><path d="M5 6L8.5 2.5V8z" fill="#e2e2e2"/><path d="M11 4.5Q13.2 8.5 11 12.5M13.5 3Q16.6 8.5 13.5 14M16 2Q19.8 8.5 16 15" fill="none" stroke="#3c3c6c" stroke-width="1.1"/></svg>
<div style="left:970px;top:745px;width:27px;height:22px;background:#a2a2a2"></div>
<div style="left:983px;top:745px;width:1px;height:22px;background:#c4c4c4"></div><div style="left:970px;top:756px;width:27px;height:1px;background:#c4c4c4"></div>
<div style="left:972px;top:746px;width:11px;height:8px;background:#f4f4f4;border:1px solid #111;border-top:2px solid #3c5aa6"></div>
<div style="left:972px;top:759px;width:7px;height:5px;background:#fff;border:1px solid #111"></div>
<div style="left:985px;top:758px;width:5px;height:4px;background:#fff;border:1px solid #111"></div>
<div style="left:991px;top:758px;width:5px;height:4px;background:#fff;border:1px solid #111"></div>
<div style="left:985px;top:762px;width:5px;height:4px;background:#fff;border:1px solid #111"></div>
<div style="left:991px;top:762px;width:5px;height:4px;background:#fff;border:1px solid #111"></div>
<svg style="left:1001px;top:745px" width="20" height="22" viewBox="0 0 20 22"><path d="M1.5 3.5L15 2L18.5 4L17 20.5H4z" fill="#b7cfdc" stroke="#8aa4b4" stroke-width="0.8"/><path d="M13 2.5L18.5 4L18 9L13.5 8z" fill="#eef4f8"/><circle cx="9" cy="12" r="3.6" fill="none" stroke="#58c088" stroke-width="1.6" stroke-dasharray="4 2"/></svg>
</div>
<div class="layer" id="qw">
<div style="left:0;top:25px;width:651px;height:426px;background:#000"></div>
<div style="left:1px;top:26px;width:648px;height:18px;background:linear-gradient(#ececec 0%,#ffffff 12%,#f4f4f4 35%,#dcdcdc 68%,#b0b0b0 100%)"></div>
<div style="left:1px;top:26px;width:66px;height:18px;background:linear-gradient(#6585c4 0%,#4668b0 45%,#3a5aa0 100%)"></div>
<div style="left:1px;top:26px;width:66px;height:1px;background:#8ba6dc"></div>
<svg style="left:66px;top:26px" width="34" height="18" viewBox="0 0 34 18"><defs><linearGradient id="gSq" x1="0" y1="0" x2="0" y2="1"><stop offset="0" stop-color="#5f82c4"/><stop offset="1" stop-color="#2f4f96"/></linearGradient></defs><path d="M0 0H1V4.5H6V9H9.5V13.5H14V18H0z" fill="#4465ac"/><rect x="9.5" y="4.5" width="5" height="4.5" fill="url(#gSq)"/><rect x="14.3" y="9" width="4.8" height="4.5" fill="url(#gSq)"/><rect x="18.5" y="13.5" width="4.6" height="4.5" fill="url(#gSq)"/><rect x="27.5" y="13.5" width="4.7" height="4.5" fill="url(#gSq)"/><rect x="9.8" y="9.3" width="4" height="4" fill="#c9c9c9" stroke="#2c4788" stroke-width="0.8"/><rect x="14.3" y="13.8" width="3.6" height="3.6" fill="#c4c4c4"/></svg>
<div style="left:6px;top:29px;width:11px;height:11px;background:#4f71b6;border:1px solid #23386c;border-right-color:#2c447e"></div>
<span class="t" style="left:22px;top:28px;color:#fff;font-weight:bold;font-size:11.2px">QEMU</span>
<div style="left:618px;top:29px;width:12px;height:12px;border:1px solid #8a8a8a;background:linear-gradient(135deg,#ffffff,#dcdcdc)"></div>
<div style="left:632px;top:29px;width:12px;height:12px;border:1px solid #8a8a8a;background:linear-gradient(135deg,#ffffff,#dcdcdc)"></div>
<div style="left:621px;top:36px;width:6px;height:2px;background:#111"></div>
<svg style="left:634px;top:31px" width="8" height="8" viewBox="0 0 8 8"><path d="M1 1L7 7M7 1L1 7" stroke="#111" stroke-width="2"/></svg>
<div style="left:1px;top:44px;width:3px;height:405px;background:linear-gradient(90deg,#6a8acb,#3f61a8)"></div>
<div style="left:646px;top:44px;width:3px;height:405px;background:linear-gradient(90deg,#fafafa,#c2c2c2)"></div>
<div style="left:1px;top:446px;width:258px;height:3px;background:linear-gradient(#6a8acb,#3f61a8 60%,#2f4f94)"></div>
<div style="left:259px;top:446px;width:390px;height:3px;background:linear-gradient(#ffffff,#e6e6e6 50%,#b4b4b4)"></div>
<div style="left:259px;top:446px;width:4px;height:3px;background:#c4c4c4"></div>
<div style="left:263px;top:446px;width:4px;height:3px;background:#4466ac"></div>
<div style="left:267px;top:446px;width:4px;height:3px;background:#c4c4c4"></div>
<div style="left:271px;top:446px;width:4px;height:3px;background:#4466ac"></div>
<div style="left:4px;top:44px;width:642px;height:402px;background:#000;overflow:hidden">
<span class="gt" style="left:1px;top:0px">Lives: 1 - Score: 1864 - (dirty rectang</span>
<span class="gt" style="left:161px;top:0px">Lives: 1 - Score: 1864 - (dirty rectang</span>
<span class="gt" style="left:321px;top:0px">Lives: 1 - Score: 1864 - (dirty rectang</span>
<span class="gt" style="left:481px;top:0px;transform:scale(0.454,0.62);top:1px">Lives: 1 - Score: 1864 - (dirty rectang</span>
<span class="gt" style="left:641px;top:0px">Lives:</span>
<svg style="left:0;top:0" width="642" height="402"><defs><pattern id="stars" width="160" height="402" patternUnits="userSpaceOnUse"><rect x="11" y="17" width="1" height="2" fill="#006a00"/><rect x="43" y="21" width="1" height="2" fill="#00dc00"/><rect x="32" y="25" width="1" height="2" fill="#0000a4"/><rect x="81" y="25" width="1" height="2" fill="#0000a4"/><rect x="119" y="25" width="1" height="2" fill="#0000a4"/><rect x="108" y="17" width="1" height="2" fill="#0000a4"/><rect x="62" y="37" width="1" height="2" fill="#006a00"/><rect x="84" y="39" width="1" height="2" fill="#0000a4"/><rect x="126" y="37" width="1" height="2" fill="#006a00"/><rect x="32" y="41" width="1" height="2" fill="#00dc00"/><rect x="71" y="47" width="1" height="2" fill="#00dc00"/><rect x="46" y="49" width="1" height="2" fill="#0000a4"/><rect x="113" y="49" width="1" height="2" fill="#006a00"/><rect x="39" y="55" width="1" height="2" fill="#0000a4"/><rect x="71" y="53" width="1" height="2" fill="#00dc00"/><rect x="103" y="57" width="1" height="2" fill="#00dc00"/><rect x="40" y="61" width="1" height="2" fill="#006a00"/><rect x="139" y="61" width="1" height="2" fill="#00dc00"/><rect x="134" y="65" width="1" height="2" fill="#00dc00"/><rect x="86" y="67" width="1" height="2" fill="#006a00"/><rect x="24" y="69" width="1" height="2" fill="#0000a4"/><rect x="61" y="73" width="1" height="2" fill="#0000a4"/><rect x="11" y="79" width="1" height="2" fill="#006a00"/><rect x="72" y="85" width="1" height="2" fill="#00dc00"/><rect x="145" y="85" width="1" height="2" fill="#0000a4"/><rect x="132" y="91" width="1" height="2" fill="#0000a4"/><rect x="22" y="97" width="1" height="2" fill="#006a00"/><rect x="109" y="101" width="1" height="2" fill="#00dc00"/><rect x="21" y="105" width="1" height="2" fill="#00dc00"/><rect x="87" y="105" width="1" height="2" fill="#0000a4"/><rect x="40" y="109" width="1" height="2" fill="#0000a4"/><rect x="125" y="109" width="1" height="2" fill="#0000a4"/><rect x="91" y="117" width="1" height="2" fill="#0000a4"/><rect x="17" y="125" width="1" height="2" fill="#00dc00"/><rect x="115" y="374" width="1" height="2" fill="#0000a4"/><rect x="130" y="232" width="1" height="2" fill="#006a00"/><rect x="131" y="378" width="1" height="2" fill="#006a00"/><rect x="47" y="184" width="1" height="2" fill="#0000a4"/><rect x="77" y="208" width="1" height="2" fill="#00dc00"/><rect x="137" y="156" width="1" height="2" fill="#006a00"/><rect x="101" y="366" width="1" height="2" fill="#006a00"/><rect x="40" y="142" width="1" height="2" fill="#006a00"/><rect x="16" y="166" width="1" height="2" fill="#00dc00"/><rect x="48" y="258" width="1" height="2" fill="#006a00"/><rect x="7" y="372" width="1" height="2" fill="#0000a4"/><rect x="112" y="236" width="1" height="2" fill="#006a00"/><rect x="59" y="286" width="1" height="2" fill="#0000a4"/><rect x="1" y="178" width="1" height="2" fill="#0000a4"/><rect x="71" y="344" width="1" height="2" fill="#006a00"/><rect x="21" y="266" width="1" height="2" fill="#0000a4"/><rect x="58" y="398" width="1" height="2" fill="#0000a4"/><rect x="7" y="170" width="1" height="2" fill="#006a00"/><rect x="27" y="340" width="1" height="2" fill="#00dc00"/><rect x="74" y="332" width="1" height="2" fill="#00dc00"/><rect x="4" y="136" width="1" height="2" fill="#006a00"/><rect x="53" y="162" width="1" height="2" fill="#0000a4"/><rect x="96" y="338" width="1" height="2" fill="#0000a4"/><rect x="18" y="236" width="1" height="2" fill="#0000a4"/><rect x="86" y="180" width="1" height="2" fill="#0000a4"/><rect x="85" y="142" width="1" height="2" fill="#0000a4"/><rect x="30" y="204" width="1" height="2" fill="#006a00"/><rect x="25" y="140" width="1" height="2" fill="#00dc00"/><rect x="119" y="384" width="1" height="2" fill="#006a00"/><rect x="143" y="232" width="1" height="2" fill="#0000a4"/><rect x="130" y="232" width="1" height="2" fill="#006a00"/><rect x="107" y="332" width="1" height="2" fill="#00dc00"/><rect x="101" y="350" width="1" height="2" fill="#006a00"/><rect x="0" y="274" width="1" height="2" fill="#006a00"/><rect x="77" y="146" width="1" height="2" fill="#006a00"/><rect x="47" y="336" width="1" height="2" fill="#006a00"/><rect x="147" y="186" width="1" height="2" fill="#00dc00"/><rect x="37" y="244" width="1" height="2" fill="#0000a4"/><rect x="66" y="140" width="1" height="2" fill="#006a00"/><rect x="84" y="286" width="1" height="2" fill="#0000a4"/><rect x="18" y="174" width="1" height="2" fill="#00dc00"/><rect x="53" y="260" width="1" height="2" fill="#00dc00"/><rect x="153" y="324" width="1" height="2" fill="#0000a4"/><rect x="159" y="368" width="1" height="2" fill="#006a00"/></pattern></defs><rect x="0" y="0" width="642" height="402" fill="url(#stars)"/></svg>
<svg style="left:18px;top:163px" width="24" height="80"><use href="#rock"/></svg>
<svg style="left:79px;top:281px" width="40" height="90"><use href="#blob"/></svg>
<svg style="left:178px;top:161px" width="24" height="80"><use href="#rock"/></svg>
<svg style="left:239px;top:279px" width="40" height="90"><use href="#blob"/></svg>
<svg style="left:338px;top:160px" width="24" height="80"><use href="#rock"/></svg>
<svg style="left:399px;top:278px" width="40" height="90"><use href="#blob"/></svg>
<svg style="left:498px;top:158px" width="24" height="80"><use href="#rock"/></svg>
<svg style="left:559px;top:276px" width="40" height="90"><use href="#blob"/></svg>
</div>
</div>
</body>
</html>
